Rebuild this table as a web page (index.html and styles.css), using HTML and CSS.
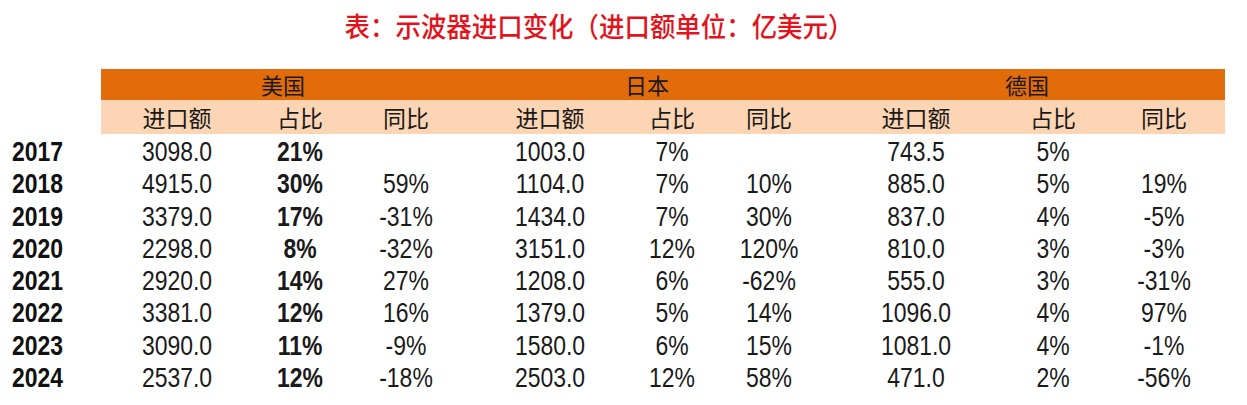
FILE: index.html
```html
<!DOCTYPE html>
<html lang="zh-CN">
<head>
<meta charset="utf-8">
<title>示波器进口变化</title>
<link rel="stylesheet" href="styles.css">
</head>
<body>
<div class="page">
  <h1 class="title"><span class="title-text">表：示波器进口变化（进口额单位：亿美元）</span></h1>
  <div class="table">
    <div class="blank"></div>
    <div class="group g1">美国</div>
    <div class="group g2">日本</div>
    <div class="group g3">德国</div>

    <div class="blank"></div>
    <div class="sub">进口额</div><div class="sub">占比</div><div class="sub">同比</div>
    <div class="sub">进口额</div><div class="sub">占比</div><div class="sub">同比</div>
    <div class="sub">进口额</div><div class="sub">占比</div><div class="sub">同比</div>

    <div class="year">2017</div>
    <div class="num">3098.0</div><div class="num bold">21%</div><div class="num"></div>
    <div class="num">1003.0</div><div class="num">7%</div><div class="num"></div>
    <div class="num">743.5</div><div class="num">5%</div><div class="num"></div>

    <div class="year">2018</div>
    <div class="num">4915.0</div><div class="num bold">30%</div><div class="num">59%</div>
    <div class="num">1104.0</div><div class="num">7%</div><div class="num">10%</div>
    <div class="num">885.0</div><div class="num">5%</div><div class="num">19%</div>

    <div class="year">2019</div>
    <div class="num">3379.0</div><div class="num bold">17%</div><div class="num">-31%</div>
    <div class="num">1434.0</div><div class="num">7%</div><div class="num">30%</div>
    <div class="num">837.0</div><div class="num">4%</div><div class="num">-5%</div>

    <div class="year">2020</div>
    <div class="num">2298.0</div><div class="num bold">8%</div><div class="num">-32%</div>
    <div class="num">3151.0</div><div class="num">12%</div><div class="num">120%</div>
    <div class="num">810.0</div><div class="num">3%</div><div class="num">-3%</div>

    <div class="year">2021</div>
    <div class="num">2920.0</div><div class="num bold">14%</div><div class="num">27%</div>
    <div class="num">1208.0</div><div class="num">6%</div><div class="num">-62%</div>
    <div class="num">555.0</div><div class="num">3%</div><div class="num">-31%</div>

    <div class="year">2022</div>
    <div class="num">3381.0</div><div class="num bold">12%</div><div class="num">16%</div>
    <div class="num">1379.0</div><div class="num">5%</div><div class="num">14%</div>
    <div class="num">1096.0</div><div class="num">4%</div><div class="num">97%</div>

    <div class="year">2023</div>
    <div class="num">3090.0</div><div class="num bold">11%</div><div class="num">-9%</div>
    <div class="num">1580.0</div><div class="num">6%</div><div class="num">15%</div>
    <div class="num">1081.0</div><div class="num">4%</div><div class="num">-1%</div>

    <div class="year">2024</div>
    <div class="num">2537.0</div><div class="num bold">12%</div><div class="num">-18%</div>
    <div class="num">2503.0</div><div class="num">12%</div><div class="num">58%</div>
    <div class="num">471.0</div><div class="num">2%</div><div class="num">-56%</div>
  </div>
</div>
</body>
</html>
```

FILE: styles.css
```css
* { box-sizing: border-box; }
html, body { margin: 0; padding: 0; background: #fff; }
body {
  width: 1247px;
  height: 405px;
  overflow: hidden;
  font-family: "Liberation Sans", Arial, sans-serif;
  color: #111;
}
.page {
  padding: 0 0 0 12px;
}
.title {
  margin: 0;
  height: 69px;
  padding-top: 9px;
  padding-right: 62px;
  text-align: center;
  font-family: "Noto Sans CJK SC", sans-serif;
  font-weight: 500;
  font-size: 24px;
  line-height: 34px;
  color: #e3121b;
}
.title-text {
  display: inline-block;
  transform: scale(1.06, 1.14);
}
.table {
  display: grid;
  grid-template-columns: 89px 152px 94px 118px 170px 74px 120px 174px 100px 122px;
  grid-template-rows: 31px 34px repeat(8, 32.3px);
}
.blank { background: #fff; }
.group {
  background: #e36c0a;
  font-family: "Noto Sans CJK SC", sans-serif;
  font-size: 22px;
  line-height: 31px;
  text-align: center;
  color: #1a1a1a;
}
.g1 { grid-column: 2 / 5; }
.g2 { grid-column: 5 / 8; }
.g3 { grid-column: 8 / 11; }
.sub {
  background: #fcd5b4;
  font-family: "Noto Sans CJK SC", sans-serif;
  font-size: 23px;
  line-height: 34px;
  text-align: center;
  color: #1a1a1a;
}
.year {
  font-weight: bold;
  font-size: 28px;
  line-height: 36px;
  color: #111;
  transform: scaleX(0.82);
  transform-origin: left center;
}
.num {
  font-size: 28px;
  line-height: 36px;
  text-align: center;
  color: #1a1a1a;
  transform: scaleX(0.82);
  transform-origin: center center;
}
.bold { font-weight: bold; }
```
